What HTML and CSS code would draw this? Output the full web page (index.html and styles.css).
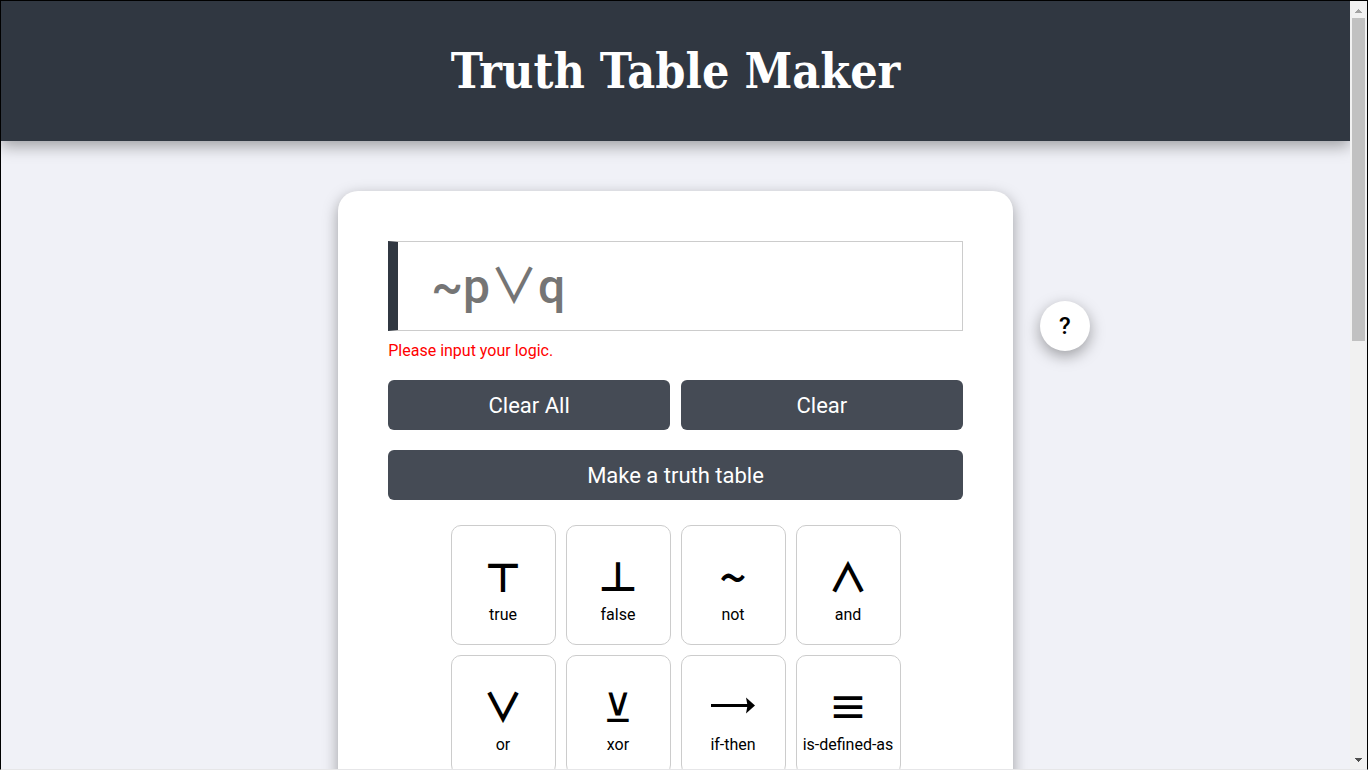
FILE: index.html
```html
<!DOCTYPE html>
<html lang="en">
<head>
<meta charset="utf-8">
<title>Truth Table Maker</title>
<link rel="stylesheet" href="styles.css">
</head>
<body>
<div class="window">
  <div class="page">
    <header class="header"><h1 class="title">Truth Table Maker</h1></header>
    <main class="main">
      <form class="card">
        <input class="logic" id="logic" type="text" placeholder="~p∨q" aria-label="Logic expression" aria-describedby="error">
        <p class="error" id="error">Please input your logic.</p>
        <div class="actions">
          <button class="button" type="button">Clear All</button>
          <button class="button" type="button">Clear</button>
          <button class="button wide" type="button">Make a truth table</button>
        </div>
        <div class="keys">
          <button class="key" type="button"><span class="symbol">⊤</span><span class="name">true</span></button>
          <button class="key" type="button"><span class="symbol">⊥</span><span class="name">false</span></button>
          <button class="key" type="button"><span class="symbol tilde">~</span><span class="name">not</span></button>
          <button class="key" type="button"><span class="symbol">∧</span><span class="name">and</span></button>
          <button class="key" type="button"><span class="symbol">∨</span><span class="name">or</span></button>
          <button class="key" type="button"><span class="symbol thin">⊻</span><span class="name">xor</span></button>
          <button class="key" type="button"><svg class="arrow" viewBox="0 0 44 52" aria-hidden="true"><path d="M0 26.5h37" fill="none" stroke="#000" stroke-width="3"/><path d="M35 18.500l9 8-9 8 1.500-8z"/></svg><span class="name">if-then</span></button>
          <button class="key" type="button"><span class="symbol">≡</span><span class="name">is-defined-as</span></button>
        </div>
      </form>
    </main>
    <button class="help" type="button" aria-label="Help">?</button>
  </div>
  <div class="scrollbar" aria-hidden="true">
    <svg class="step" viewBox="0 0 17 17" shape-rendering="crispEdges"><path fill="#a3a3a3" d="M8 8h1v1h1v1h1v1h1v1H5v-1h1v-1h1V9h1z"/></svg>
    <div class="track"><div class="thumb"></div></div>
    <svg class="step" viewBox="0 0 17 17" shape-rendering="crispEdges"><path fill="#505050" d="M5 6h7v1h-1v1h-1v1H9v1H8V9H7V8H6V7H5z"/></svg>
  </div>
</div>
</body>
</html>
```
FILE: styles.css
```css
* { box-sizing: border-box; }

body {
  margin: 0;
  height: 100vh;
  overflow: hidden;
  font-family: Roboto, "Liberation Sans", sans-serif;
  color: #000;
}

button, input { font: inherit; color: inherit; }

.window {
  display: flex;
  height: 100vh;
  border: 1px solid #000;
  border-bottom-color: #e6e6e8;
}

.page {
  position: relative;
  flex: 1;
  overflow: hidden;
  background: #f0f1f7;
}

.header {
  display: flex;
  align-items: center;
  justify-content: center;
  height: 140px;
  background: #303741;
  box-shadow: 0 5px 15px rgba(0, 0, 0, .35);
}

.title {
  margin: 0;
  color: #fff;
  font: bold 48px "DejaVu Serif Condensed", "DejaVu Serif", serif;
}

.main {
  display: flex;
  justify-content: center;
  padding: 50px 0;
}

.card {
  width: 50%;
  padding: 50px;
  border-radius: 20px;
  background: #fff;
  box-shadow: 0 5px 15px rgba(0, 0, 0, .35);
}

.logic {
  display: block;
  width: 100%;
  height: 90px;
  padding: 0 33px;
  border: 1px solid #ccc;
  border-left: 10px solid #303741;
  border-radius: 0;
  background: #fff;
  font-family: Roboto, "Noto Sans CJK JP", sans-serif;
  font-size: 48px;
  font-weight: 500;
  outline: 0;
}

.logic::placeholder { color: #757575; opacity: 1; }

.error {
  margin: 10px 0 20px;
  color: #f00;
  font-size: 16px;
  line-height: 19px;
}

.actions {
  display: grid;
  grid-template-columns: 1fr 1fr;
  gap: 20px 11px;
}

.button {
  height: 50px;
  padding: 0;
  border: 0;
  border-radius: 6px;
  background: #454b55;
  color: #fff;
  font-size: 22px;
}

.wide { grid-column: 1 / -1; }

.keys {
  display: flex;
  flex-wrap: wrap;
  justify-content: center;
  gap: 10px;
  margin-top: 25px;
  padding: 0 40px;
}

.key {
  display: flex;
  flex-direction: column;
  align-items: center;
  gap: 4px;
  width: 105px;
  height: 120px;
  padding: 23px 0 0;
  border: 1px solid #ccc;
  border-radius: 10px;
  background: #fff;
}

.symbol {
  font: 700 40px/52px "Noto Sans CJK JP", "DejaVu Sans", sans-serif;
}

.tilde { font-size: 48px; font-weight: 500; }

.thin { font-weight: 400; }

.arrow { width: 44px; height: 52px; }

.name {
  font-size: 16px;
  line-height: 20px;
  white-space: nowrap;
}

.help {
  position: absolute;
  top: 300px;
  left: 77%;
  width: 50px;
  height: 50px;
  padding: 0;
  border: 0;
  border-radius: 50%;
  background: #fff;
  box-shadow: 0 5px 15px rgba(0, 0, 0, .35);
  font-size: 24px;
  font-weight: 500;
}

.scrollbar {
  display: flex;
  flex-direction: column;
  width: 17px;
  background: #f1f1f1;
}

.step { width: 17px; height: 17px; }

.track { flex: 1; padding: 0 2px; }

.thumb { height: 44%; background: #c1c1c1; }
```
